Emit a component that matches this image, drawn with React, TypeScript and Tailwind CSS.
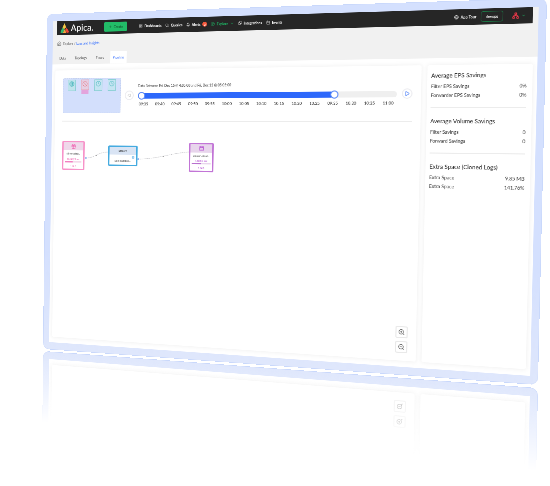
import React from "react";
import {
  Bell,
  Calendar,
  ChevronDown,
  CircleOff,
  Clock,
  Compass,
  Database,
  Gift,
  Globe,
  House,
  LayoutGrid,
  Network,
  Play,
  Plus,
  Puzzle,
  Search,
  Settings,
  ZoomIn,
  ZoomOut,
} from "lucide-react";

const ticks = [
  "09:35", "09:40", "09:45", "09:50", "09:55", "10:00", "10:05", "10:10",
  "10:15", "10:20", "10:25", "09:35", "10:30", "10:35", "11:00",
];

const savings = [
  { title: "Average EPS Savings", rows: [["Filter EPS Savings", "0%"], ["Forwarder EPS Savings", "0%"]] },
  { title: "Average Volume Savings", rows: [["Filter Savings", "0"], ["Forward Savings", "0"]] },
  { title: "Extra Space (Cloned Logs)", rows: [["Extra Space", "9.85 MB"], ["Extra Space", "141.76%"]] },
];

const card = "rounded-[4px] bg-white shadow-[0_0_8px_2px_rgba(0,0,0,0.05)]";

function Logo() {
  return (
    <a href="#home" className="flex items-center gap-[3px] text-white">
      <svg viewBox="0 0 20 20" className="size-[21px]">
        <path d="M9 0 L13 8 L8 12 L5 8 Z" fill="#f6c744" />
        <path d="M5 8 L9 13 L6 19 H1 Q0 18 1 16 Z" fill="#35b56a" />
        <path d="M10 11 L13 19 H6 Z" fill="#f5a13c" />
        <path d="M14 9 L19 17 Q19 19 17 19 H14 L11 12 Z" fill="#ee4637" />
      </svg>
      <span className="text-[19px] font-medium">Apica.</span>
    </a>
  );
}

function NavLink({ icon, children }: { icon: React.ReactNode; children: React.ReactNode }) {
  return (
    <a href="#nav" className="flex items-center gap-1 whitespace-nowrap">
      {icon}
      {children}
    </a>
  );
}

function TopBar() {
  return (
    <header className="mx-[10px] flex h-[30px] items-center bg-[#262626] pl-[7px] pr-3 text-[7px] font-bold text-white">
      <Logo />
      <button className="ml-6 flex h-5 w-[51px] items-center justify-center gap-1 rounded-[3px] bg-[#22bd68] font-normal text-[#14532d]">
        <Plus className="size-2" />
        Create
      </button>
      <nav className="ml-[26px] flex items-center gap-2">
        <NavLink icon={<LayoutGrid className="size-2" />}>Dashboards</NavLink>
        <NavLink icon={<Search className="size-2" />}>Queries</NavLink>
        <NavLink icon={<Bell className="size-2" />}>
          Alerts
          <span className="flex size-[10px] items-center justify-center rounded-full bg-[#f4583c] text-[6px]">2</span>
        </NavLink>
        <a href="#explore" className="flex items-center gap-1 text-[#1fae62]">
          <Compass className="size-2" />
          Explore
          <ChevronDown className="size-2" />
        </a>
        <NavLink icon={<Puzzle className="size-2" />}>Integrations</NavLink>
        <NavLink icon={<Calendar className="size-2" />}>Events</NavLink>
      </nav>
      <div className="ml-auto flex items-center gap-2">
        <NavLink icon={<Globe className="size-2" />}>App Tour</NavLink>
        <button className="h-5 w-10 rounded-[4px] border border-[#1c7a47]">devops</button>
        <button aria-label="Account" className="ml-2 flex items-center gap-1 text-[#1fae62]">
          <Network className="size-3 text-[#f0384a]" strokeWidth={3} />
          <ChevronDown className="size-2" />
        </button>
      </div>
    </header>
  );
}

function SubHeader() {
  return (
    <>
      <div className="flex h-9 items-center gap-1 px-[10px] text-[7px] text-[#555]">
        <House className="size-[10px] text-[#666]" />
        <p>
          Explore / <a href="#logs" className="text-[#2f6bff]">Logs and Insights</a>
        </p>
      </div>
      <nav className="flex h-[26px] items-stretch pl-[6px] text-[7px] text-[#444]">
        <a href="#data" className="flex items-center px-[10px]">Data</a>
        <a href="#topology" className="flex items-center px-[10px]">Topology</a>
        <a href="#flows" className="flex items-center px-[10px]">Flows</a>
        <a href="#pipeline" className="ml-1 flex w-9 items-center justify-center bg-white text-[#2f6bff]">Pipeline</a>
      </nav>
    </>
  );
}

function MiniMap() {
  return (
    <div className="flex h-[74px] w-[130px] shrink-0 items-start gap-3 rounded-[3px] border border-dashed border-[#c3cfee] bg-[#d3dffc] pl-[10px] pt-[2px]">
      <div className="flex h-6 w-[18px] justify-center border border-[#8bd0d4] bg-[#bfe3ec] pt-[2px]">
        <Globe className="size-3 text-[#43b3ba]" />
      </div>
      <div className="w-[18px]">
        <div className="flex h-[22px] justify-center border border-[#e7a3b4] bg-[#e6cfe2] pt-[2px]">
          <CircleOff className="size-3 text-[#e57f8f]" />
        </div>
        <div className="mx-[1px] h-2 bg-[#e3a4dc]" />
      </div>
      <div className="flex h-6 w-[18px] justify-center border border-[#8bd0d4] bg-[#c5e4f2] pt-[2px]">
        <Clock className="size-3 text-[#5cbfc6]" />
      </div>
      <div className="flex h-6 w-[18px] justify-center border border-[#8bd0d4] bg-[#c5e4f2] pt-[2px]">
        <Clock className="size-3 text-[#5cbfc6]" />
      </div>
    </div>
  );
}

const rangeInput =
  "pointer-events-none absolute inset-0 h-4 w-full appearance-none bg-transparent " +
  "[&::-webkit-slider-thumb]:pointer-events-auto [&::-webkit-slider-thumb]:size-4 [&::-webkit-slider-thumb]:appearance-none " +
  "[&::-webkit-slider-thumb]:rounded-full [&::-webkit-slider-thumb]:border-2 [&::-webkit-slider-thumb]:border-solid " +
  "[&::-webkit-slider-thumb]:border-[#5b8af8] [&::-webkit-slider-thumb]:bg-white";

function Timeline() {
  return (
    <div className="min-w-0 flex-1 self-start pt-3">
      <p className="text-[7px] leading-[10px] text-[#444]">
        Data Between <b>Fri, Dec 15 @ 4:05:00</b> and <b>Fri, Dec 15 @ 05:05:00</b>
      </p>
      <div className="relative mt-2 flex h-4 items-center">
        <div className="h-3 w-full rounded-full bg-[#efefef]">
          <div className="h-3 w-[78%] rounded-full bg-[#2d68fb]" />
        </div>
        <input type="range" aria-label="Range start" min={0} max={100} defaultValue={0} className={rangeInput} />
        <input type="range" aria-label="Range end" min={0} max={100} defaultValue={78} className={rangeInput} />
      </div>
      <div className="mt-1 flex justify-between pl-[2px] pr-[6px] text-[8px] font-medium leading-[10px] text-[#333]">
        {ticks.map((t, i) => (
          <span key={i}>{t}</span>
        ))}
      </div>
    </div>
  );
}

function StepButton({ label, flip }: { label: string; flip?: boolean }) {
  return (
    <button
      aria-label={label}
      className="flex size-5 shrink-0 items-center justify-center rounded-full border-2 border-[#ececf0] bg-white"
    >
      <Play className={flip ? "size-2 rotate-180 text-[#c8c8c8]" : "size-[10px] text-[#5b8af8]"} strokeWidth={3} />
    </button>
  );
}

function ZoomButtons() {
  return (
    <div className="absolute bottom-[15px] right-0 flex flex-col gap-[6px]">
      <button aria-label="Zoom in" className="flex size-[23px] items-center justify-center rounded-[3px] border-2 border-[#e9e9e9] bg-white">
        <ZoomIn className="size-[13px] text-[#555]" />
      </button>
      <button aria-label="Zoom out" className="flex size-[23px] items-center justify-center rounded-[3px] border-2 border-[#e9e9e9] bg-white">
        <ZoomOut className="size-[13px] text-[#555]" />
      </button>
    </div>
  );
}

function Canvas() {
  return (
    <div className="relative ml-[2px] h-[462px] text-[5px] leading-[8px] text-[#333]">
      <svg className="absolute left-0 top-0 h-[120px] w-[340px]" viewBox="0 0 340 120" fill="none">
        <path d="M54 77 C75 77 80 64 104 64" stroke="#c4c4c8" strokeDasharray="3 1" />
        <path d="M170 78 C215 77 240 65 280 62" stroke="#c4c4c8" strokeDasharray="3 1" />
        <circle cx="54" cy="77" r="2" fill="#8db0ee" />
        <circle cx="171" cy="78" r="2" fill="#8db0ee" />
        <circle cx="78" cy="71" r="1" fill="#888" />
        <circle cx="226" cy="72" r="1" fill="#888" />
      </svg>
      <div className="absolute left-0 top-[41px] h-[62px] w-[51px] rounded-[3px] border-[3px] border-[#f793c9] bg-white text-center">
        <div className="flex h-[17px] items-center justify-center bg-[#efd8ea]">
          <Gift className="size-3 text-[#f060b0]" />
        </div>
        <p className="mt-[3px]">s3-metadata...</p>
        <p className="mt-1 text-[#ee5cae]">10.6kB/1 sec</p>
        <div className="mx-1 h-[3px] bg-[#f4d9ea]">
          <div className="h-[3px] w-[45%] bg-[#f27fc0]" />
        </div>
        <p className="mt-1 text-[#ee5cae]">1.0kB</p>
      </div>
      <div className="absolute left-[104px] top-[50px] h-[43px] w-[65px] rounded-[3px] border-[3px] border-[#45abe0] bg-white text-center">
        <p className="flex h-4 items-center justify-center bg-[#d9e4f4] text-[6px]">Stream</p>
        <Settings className="ml-auto mr-[3px] mt-[2px] size-[7px] text-[#3d9be0]" />
        <p>s3-metadata.lo...</p>
      </div>
      <div className="absolute left-[280px] top-[43px] h-[60px] w-[52px] rounded-[3px] border-[3px] border-[#c275d6] bg-white text-center">
        <div className="flex h-[17px] items-center justify-center bg-[#e8d5ec]">
          <Database className="size-[11px] text-[#b855d2]" />
        </div>
        <p className="mt-[3px]">amazon-cloud...</p>
        <p className="mt-[2px] text-[#b44fd0]">7.8kB/1 sec</p>
        <div className="mx-[3px] h-[3px] bg-[#e8d5ec]">
          <div className="h-[3px] w-1/2 bg-[#b970cf]" />
        </div>
        <p className="mt-1 text-[#b44fd0]">1.0kB</p>
      </div>
      <ZoomButtons />
    </div>
  );
}

function SavingsPanel() {
  return (
    <aside className={`${card} pl-[7px] pr-[10px] pt-[13px] text-[#333]`}>
      {savings.map((group, i) => (
        <section key={group.title} className={i > 0 ? "mt-[14px] border-t-2 border-[#ececec] pt-[18px]" : ""}>
          <h2 className="text-[11px] font-medium leading-[14px]">{group.title}</h2>
          <dl className="mt-[5px] text-[9px] leading-[17px]">
            {group.rows.map(([name, value], j) => (
              <div key={j} className="flex justify-between">
                <dt>{name}</dt>
                <dd>{value}</dd>
              </div>
            ))}
          </dl>
        </section>
      ))}
    </aside>
  );
}

const frame =
  "rounded-[14px] border border-[#c9d8fb] bg-linear-to-b from-[#d4e0fe] from-70% to-[#dfe7fc] px-[13px] py-[15px]";

function Screen() {
  return (
    <div className={frame}>
      <div className="bg-white">
        <div className="bg-[#f1f1f1]">
          <TopBar />
          <SubHeader />
        </div>
        <div className="grid grid-cols-[1fr_189px] gap-[11px] pb-3 pl-[7px] pr-2 pt-[13px]">
          <main className={`${card} px-4 pt-[17px]`}>
            <div className="flex items-center gap-[9px] border-b-2 border-[#ececec] pb-4 pl-[2px]">
              <MiniMap />
              <StepButton label="Earlier" flip />
              <Timeline />
              <StepButton label="Later" />
            </div>
            <Canvas />
          </main>
          <SavingsPanel />
        </div>
      </div>
    </div>
  );
}

// The lower part of the screen, mirrored on the floor and fading out.
function Reflection() {
  return (
    <div inert className="mask-linear-180 mask-linear-from-0% mask-linear-to-21%">
      <div className={`${frame} -scale-y-100`}>
        <div className="grid h-[690px] grid-cols-[1fr_189px] gap-[11px] bg-white pb-3 pl-[7px] pr-2 pt-[105px]">
          <div className={`${card} px-4`}>
            <div className="relative h-full opacity-60">
              <ZoomButtons />
            </div>
          </div>
          <div className={card} />
        </div>
      </div>
    </div>
  );
}

export default function App() {
  return (
    <div className="h-screen overflow-hidden bg-white px-[25px] font-['Lato','Liberation_Sans',sans-serif]">
      <div className="grid grid-cols-1 items-start">
        <div className="[grid-area:1/1] w-[200%] origin-top-left [transform:matrix3d(0.424343,-0.01644,0,-0.00013773,-0.004001,0.475653,0,0.00001105,0,0,1,0,18,351,0,1)]">
          <Reflection />
        </div>
        <div className="[grid-area:1/1] w-[200%] origin-top-left [transform:matrix3d(0.429487,-0.01573,0,-0.00013508,-0.005364,0.468985,0,0.00001062,0,0,1,0,22,14,0,1)]">
          <Screen />
        </div>
      </div>
    </div>
  );
}
